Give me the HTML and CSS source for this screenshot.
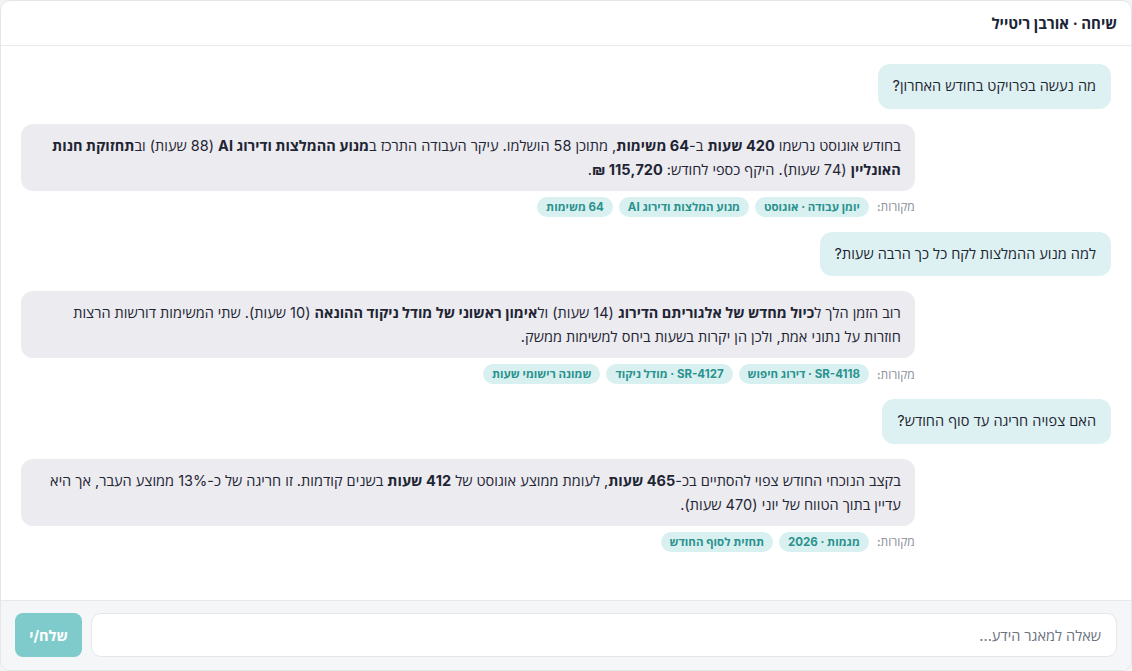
FILE: index.html
```html
<!DOCTYPE html>
<html lang="he" dir="rtl">
<head>
<meta charset="utf-8">
<title>שיחה</title>
<link rel="stylesheet" href="styles.css">
</head>
<body>
<div class="chat">
  <div class="header">שיחה · אורבן ריטייל</div>
  <div class="messages">
    <div class="msg user">מה נעשה בפרויקט בחודש האחרון?</div>
    <div class="group">
      <div class="msg bot">בחודש אוגוסט נרשמו <b>420 שעות</b> ב-<b>64 משימות</b>, מתוכן 58 הושלמו. עיקר העבודה התרכז ב<b>מנוע ההמלצות ודירוג AI</b> (88 שעות) וב<b>תחזוקת חנות האונליין</b> (74 שעות). היקף כספי לחודש: <b>115,720 ₪</b>.</div>
      <div class="sources"><span class="label">מקורות:</span><span class="chip">יומן עבודה · אוגוסט</span><span class="chip">מנוע המלצות ודירוג AI</span><span class="chip">64 משימות</span></div>
    </div>
    <div class="msg user">למה מנוע ההמלצות לקח כל כך הרבה שעות?</div>
    <div class="group">
      <div class="msg bot">רוב הזמן הלך ל<b>כיול מחדש של אלגוריתם הדירוג</b> (14 שעות) ול<b>אימון ראשוני של מודל ניקוד ההונאה</b> (10 שעות). שתי המשימות דורשות הרצות חוזרות על נתוני אמת, ולכן הן יקרות בשעות ביחס למשימות ממשק.</div>
      <div class="sources"><span class="label">מקורות:</span><span class="chip">SR-4118 · דירוג חיפוש</span><span class="chip">SR-4127 · מודל ניקוד</span><span class="chip">שמונה רישומי שעות</span></div>
    </div>
    <div class="msg user">האם צפויה חריגה עד סוף החודש?</div>
    <div class="group">
      <div class="msg bot">בקצב הנוכחי החודש צפוי להסתיים בכ-<b>465 שעות</b>, לעומת ממוצע אוגוסט של <b>412 שעות</b> בשנים קודמות. זו חריגה של כ-13% ממוצע העבר, אך היא עדיין בתוך הטווח של יוני (470 שעות).</div>
      <div class="sources"><span class="label">מקורות:</span><span class="chip">מגמות · 2026</span><span class="chip">תחזית לסוף החודש</span></div>
    </div>
  </div>
  <div class="footer">
    <div class="input">שאלה למאגר הידע...</div>
    <div class="send">שלח/י</div>
  </div>
</div>
</body>
</html>
```

FILE: styles.css
```css
* { box-sizing: border-box; }
html, body { margin: 0; padding: 0; background: #f3f4f6; }
body {
  font-family: Inter, "Open Sans", sans-serif;
  color: #1f2533;
  font-size: 14.5px;
}
.chat {
  width: 1132px;
  height: 671px;
  background: #ffffff;
  border: 1px solid #e4e6ea;
  border-radius: 10px;
  display: flex;
  flex-direction: column;
  overflow: hidden;
}
.header {
  height: 45px;
  flex: none;
  display: flex;
  align-items: center;
  padding: 0 14px;
  font-weight: 700;
  font-size: 15px;
  color: #1b2436;
  border-bottom: 1px solid #e8eaee;
}
.messages {
  flex: 1;
  display: flex;
  flex-direction: column;
  align-items: flex-start;
  gap: 15px;
  padding: 18px 20px;
}
.msg {
  line-height: 24px;
  border-radius: 12px;
}
.user {
  background: #ddf1f2;
  padding: 10.3px 15px;
}
.group {
  align-self: flex-end;
  width: 82%;
  display: flex;
  flex-direction: column;
  gap: 6px;
}
.bot {
  background: #ebebf0;
  padding: 10px 14px 9px;
}
.sources {
  display: flex;
  align-items: center;
  gap: 6px;
  font-size: 11.5px;
}
.label {
  color: #8b909a;
  font-weight: 500;
  font-size: 12px;
  margin-left: 2px;
}
.chip {
  background: #d9f0f0;
  color: #2a928f;
  font-weight: 700;
  border-radius: 10px;
  padding: 0 9px;
  height: 20px;
  line-height: 20px;
}
.footer {
  flex: none;
  height: 70px;
  border-top: 1px solid #e6e8ec;
  background: #f5f6f8;
  display: flex;
  gap: 9px;
  padding: 12px 14px 13px;
}
.input {
  flex: 1;
  background: #ffffff;
  border: 1px solid #e3e6ea;
  border-radius: 10px;
  display: flex;
  align-items: center;
  padding: 0 15px;
  color: #6b7280;
  font-size: 14.5px;
}
.send {
  width: 67px;
  flex: none;
  background: #7fcbcb;
  color: #ffffff;
  font-weight: 700;
  border-radius: 8px;
  display: flex;
  align-items: center;
  justify-content: center;
  font-size: 14.5px;
}
```
